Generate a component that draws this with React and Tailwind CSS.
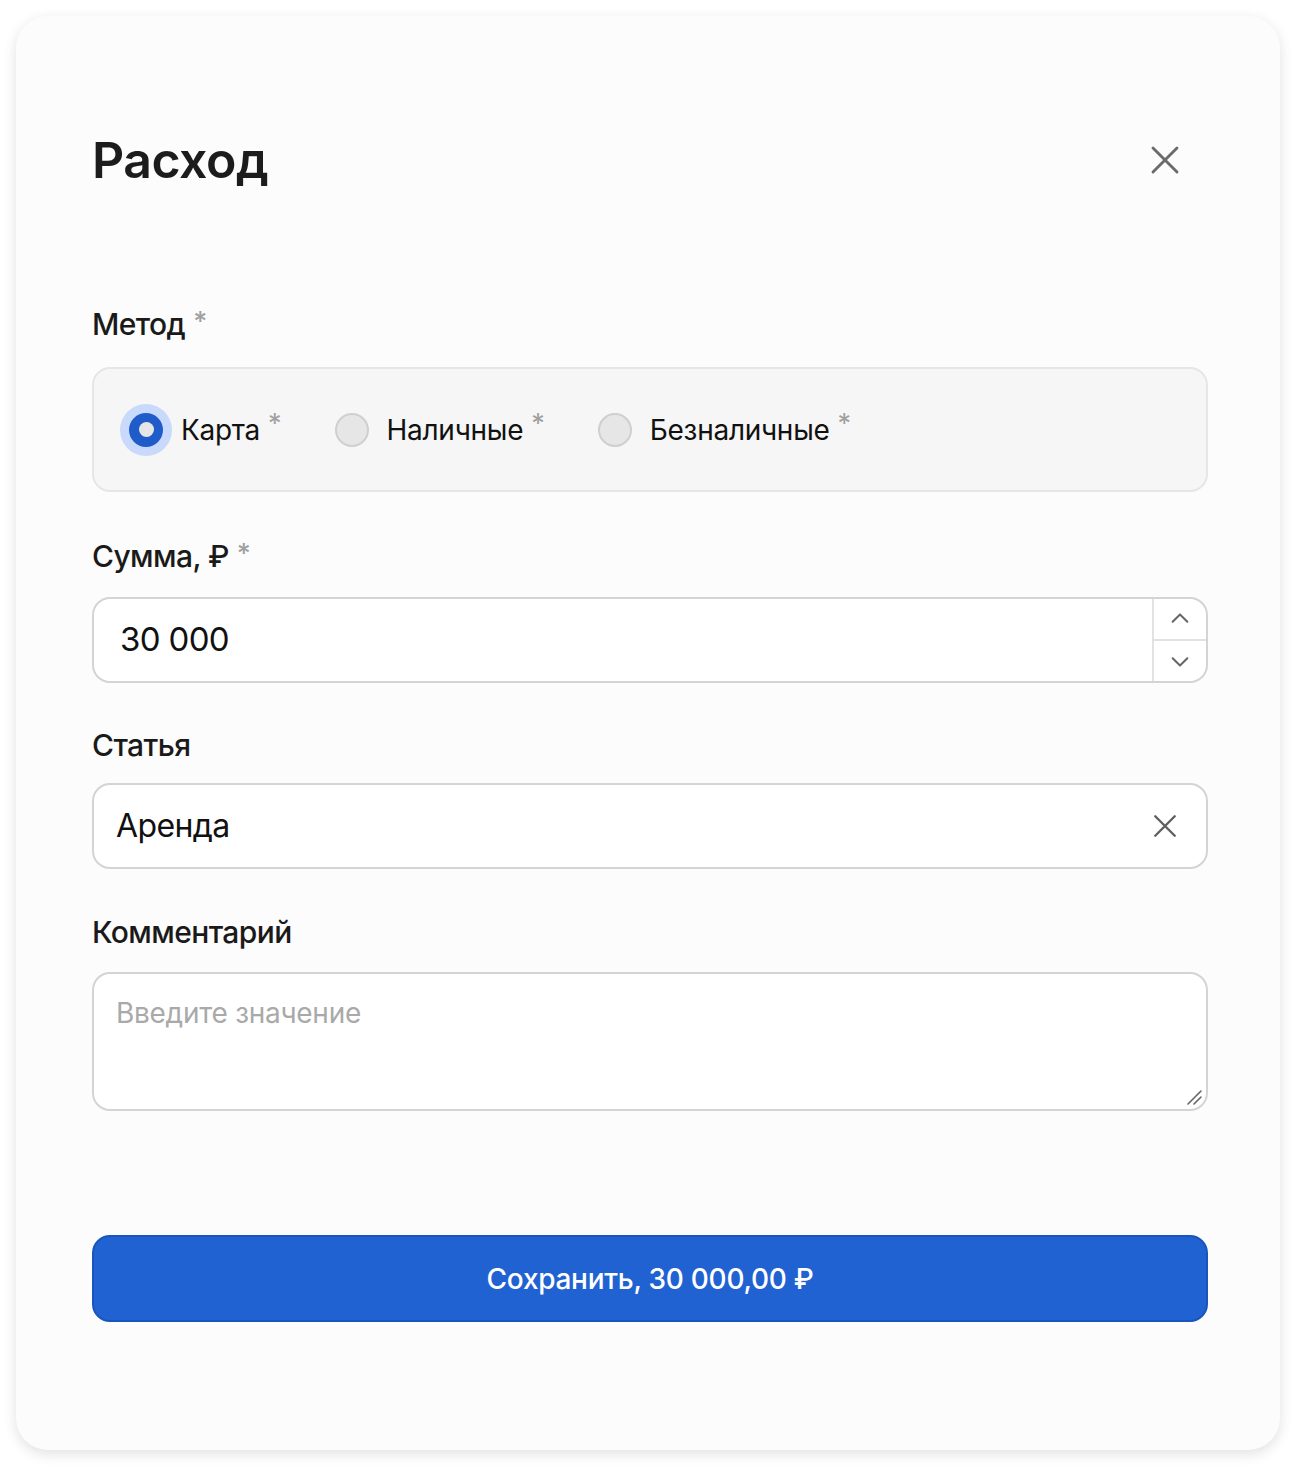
import React from 'react'

const font = { fontFamily: 'Inter, "Noto Sans", sans-serif' }

const Label = ({ children, required, className = '' }) => (
  <div className={`flex items-start text-[30px] font-medium leading-9 tracking-[-0.02em] text-[#1a1a1a] ${className}`}>
    <span>{children}</span>
    {required && <span className="ml-2 mt-[2px] text-[27px] leading-none text-[#a0a0a0]">*</span>}
  </div>
)

const Radio = ({ label, checked }) => (
  <label className="flex items-center">
    {checked ? (
      <span className="flex h-[34px] w-[34px] items-center justify-center rounded-full bg-[#1f5cc9] shadow-[0_0_0_9px_#c9d9fb]">
        <span className="h-[15px] w-[15px] rounded-full bg-[#e6e6e6]" />
      </span>
    ) : (
      <span className="h-[34px] w-[34px] rounded-full border-2 border-[#cfcfcf] bg-[#e6e6e6]" />
    )}
    <span className="ml-[18px] text-[28px] leading-9 tracking-[-0.01em] text-[#111]">{label}</span>
    <span className="ml-2 self-start mt-[-2px] text-[27px] leading-none text-[#a0a0a0]">*</span>
  </label>
)

export default function App() {
  return (
    <div className="min-h-[1474px] bg-white p-4" style={font}>
      <div className="flex h-[1434px] w-[1264px] flex-col rounded-[32px] bg-[#fcfcfc] pl-[76px] pr-[72px] pt-[116px] shadow-[0_4px_14px_rgba(0,0,0,0.12)]">
        <div className="flex h-14 items-center justify-between">
          <h1 className="text-[50px] font-semibold leading-[56px] tracking-[-0.01em] text-[#1c1c1c]">Расход</h1>
          <button className="mr-[25px] text-[#6b6b6b]">
            <svg width="36" height="36" viewBox="0 0 24 24" fill="none" stroke="currentColor" strokeWidth="1.9" strokeLinecap="round">
              <path d="M4 4l16 16M20 4L4 20" />
            </svg>
          </button>
        </div>

        <Label required className="mt-[118px]">Метод</Label>
        <div className="mt-[25px] flex h-[125px] items-center gap-[53px] rounded-[18px] border-2 border-[#e6e6e6] bg-[#f6f6f6] px-[35px]">
          <Radio label="Карта" checked />
          <Radio label="Наличные" />
          <Radio label="Безналичные" />
        </div>

        <Label required className="mt-[46px]">Сумма, ₽</Label>
        <div className="mt-[23px] flex h-[86px] overflow-hidden rounded-[18px] border-2 border-[#d4d4d4] bg-white">
          <div className="flex flex-1 items-center pl-[26px] text-[33px] tracking-[-0.02em] text-[#111]">30 000</div>
          <div className="flex w-[54px] flex-col border-l-2 border-[#e2e2e2]">
            <div className="flex flex-1 items-center justify-center border-b-2 border-[#e2e2e2] text-[#666]">
              <svg width="22" height="22" viewBox="0 0 24 24" fill="none" stroke="currentColor" strokeWidth="2.2" strokeLinecap="round" strokeLinejoin="round">
                <path d="M4 15l8-8 8 8" />
              </svg>
            </div>
            <div className="flex flex-1 items-center justify-center text-[#666]">
              <svg width="22" height="22" viewBox="0 0 24 24" fill="none" stroke="currentColor" strokeWidth="2.2" strokeLinecap="round" strokeLinejoin="round">
                <path d="M4 9l8 8 8-8" />
              </svg>
            </div>
          </div>
        </div>

        <Label className="mt-[44px]">Статья</Label>
        <div className="mt-[20px] flex h-[86px] items-center justify-between rounded-[18px] border-2 border-[#d4d4d4] bg-white pl-[22px] pr-[28px]">
          <span className="text-[32px] tracking-[-0.02em] text-[#111]">Аренда</span>
          <svg width="26" height="26" viewBox="0 0 24 24" fill="none" stroke="#5f5f5f" strokeWidth="2.2" strokeLinecap="round">
            <path d="M3 3l18 18M21 3L3 21" />
          </svg>
        </div>

        <Label className="mt-[45px]">Комментарий</Label>
        <div className="relative mt-[22px] h-[139px] rounded-[18px] border-2 border-[#d4d4d4] bg-white px-[22px] pt-[21px]">
          <span className="text-[28px] leading-9 tracking-[-0.01em] text-[#a9a9a9]">Введите значение</span>
          <svg className="absolute bottom-[3px] right-[3px]" width="18" height="18" viewBox="0 0 18 18" stroke="#666" strokeWidth="1.6" strokeLinecap="round">
            <path d="M16 3L3 16M16 9L9 16" />
          </svg>
        </div>

        <button className="mt-[124px] flex h-[87px] items-center justify-center rounded-[18px] border-2 border-[#1a55bd] bg-[#2162d2] text-[28px] font-medium tracking-[-0.01em] text-white">
          Сохранить, 30 000,00 ₽
        </button>
      </div>
    </div>
  )
}
